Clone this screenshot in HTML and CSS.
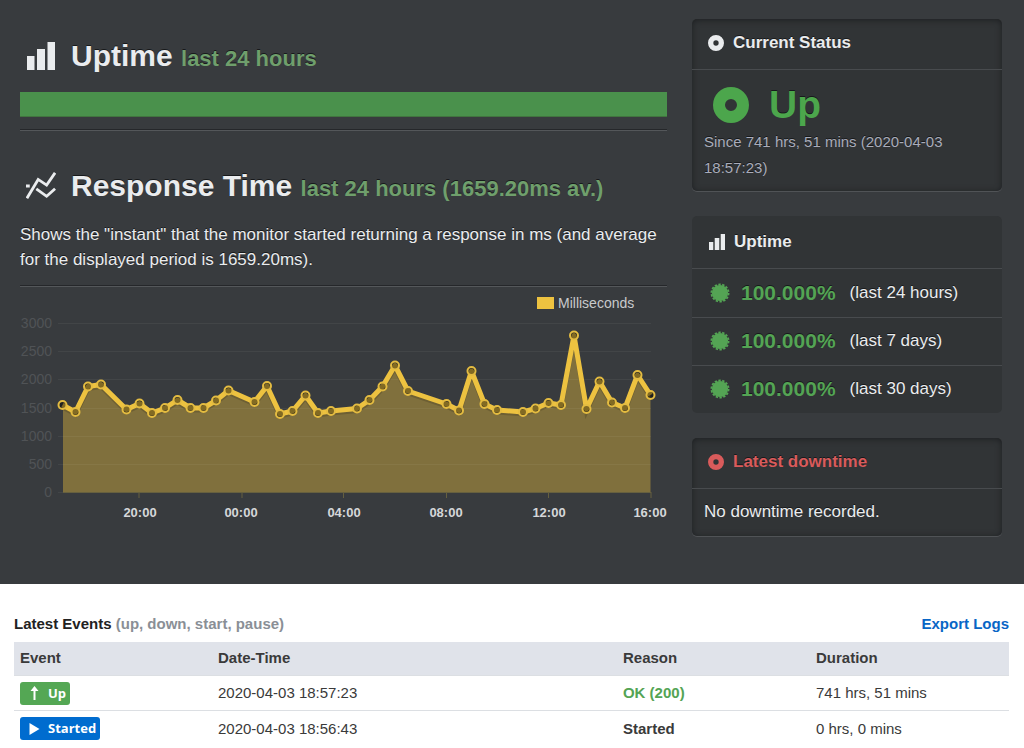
FILE: index.html
```html
<!DOCTYPE html>
<html lang="en">
<head>
<meta charset="utf-8">
<title>Monitor status</title>
<link rel="stylesheet" href="styles.css">
</head>
<body>
<svg class="defs" aria-hidden="true">
  <symbol id="bars" viewBox="0 0 28 28"><path d="M0 14h7.500v14H0zM10 7h8v21h-8zM20.500 0H28v28h-7.500z"/></symbol>
  <symbol id="disc" viewBox="0 0 36 36"><path fill-rule="evenodd" d="M18 0a18 18 0 1 0 0 36a18 18 0 1 0 0-36zM18 12a6 6 0 1 1 0 12a6 6 0 1 1 0-12z"/></symbol>
  <symbol id="seal" viewBox="0 0 20 20"><circle cx="10" cy="10" r="8.100"/><circle cx="10" cy="10" r="8.600" fill="none" stroke="currentColor" stroke-width="1.800" stroke-dasharray="2.400 1.460"/></symbol>
</svg>
<main class="dashboard">
  <div class="charts">
    <h2 class="heading"><svg class="heading-icon"><use href="#bars"/></svg><span>Uptime <small>last 24 hours</small></span></h2>
    <div class="uptime-bar"></div>
    <hr class="rule">
    <h2 class="heading heading-response"><svg class="heading-icon heading-trend" viewBox="0 0 32 28"><path d="M1 27L13 7l9 6L31 0M11 17l11 8 9-8M0 14h4" /></svg><span>Response Time <small>last 24 hours (1659.20ms av.)</small></span></h2>
    <p class="note">Shows the "instant" that the monitor started returning a response in ms (and average for the displayed period is 1659.20ms).</p>
    <hr class="rule rule-chart">
    <svg class="chart" viewBox="20 290 647 234" role="img" aria-label="Response time in milliseconds">
      <defs><marker id="dot" markerUnits="userSpaceOnUse" markerWidth="14" markerHeight="14" refX="7" refY="7"><circle class="dot" cx="7" cy="7" r="4"/></marker></defs>
      <rect class="legend-box" x="537" y="297" width="17" height="12"/>
      <text class="legend" x="558" y="308">Milliseconds</text>
      <g class="y-axis">
        <text x="52" y="328">3000</text><text x="52" y="356">2500</text><text x="52" y="384">2000</text><text x="52" y="413">1500</text><text x="52" y="441">1000</text><text x="52" y="469">500</text><text x="52" y="497">0</text>
      </g>
      <path class="area" d="M63 492V405L75.500 412L88 386.500L101 384.500L126.500 409.500L139.500 403.500L152 413L165 408L177.500 400L190.500 408L203.500 408L216 400.500L228.500 390.500L254.500 402L267 386L280 414L292.500 411L305.500 395.500L318 413L331 411L357 408.500L369.500 400L382.500 386.500L395 365.500L408 391L446.500 404L459 410.500L471.500 371L484.500 404L497 410L523 412L535.500 408.500L548.500 403L561 405L574 335.500L586.500 409L599.500 381.500L612 402.500L625 408L637.500 375L650.500 395V492Z"/>
      <path class="grid" d="M58 323.500H651M58 351.500H651M58 379.500H651M58 408.500H651M58 436.500H651M58 464.500H651M58 492.500H651"/>
      <path class="ticks" d="M63 492.500H651M139 492v6M242 492v6M343.500 492v6M446.500 492v6M548.500 492v6M651 492v6"/>
      <polyline class="shade" points="62.500,407 75.500,414 88,388.500 101,386.500 126.500,411.500 139.500,405.500 152,415 165,410 177.500,402 190.500,410 203.500,410 216,402.500 228.500,392.500 254.500,404 267,388 280,416 292.500,413 305.500,397.500 318,415 331,413 357,410.500 369.500,402 382.500,388.500 395,367.500 408,393 446.500,406 459,412.500 471.500,373 484.500,406 497,412 523,414 535.500,410.500 548.500,405 561,407 574,337.500 586.500,411 599.500,383.500 612,404.500 625,410 637.500,377 650.500,397"/>
      <polyline class="line" points="62.500,405 75.500,412 88,386.500 101,384.500 126.500,409.500 139.500,403.500 152,413 165,408 177.500,400 190.500,408 203.500,408 216,400.500 228.500,390.500 254.500,402 267,386 280,414 292.500,411 305.500,395.500 318,413 331,411 357,408.500 369.500,400 382.500,386.500 395,365.500 408,391 446.500,404 459,410.500 471.500,371 484.500,404 497,410 523,412 535.500,408.500 548.500,403 561,405 574,335.500 586.500,409 599.500,381.500 612,402.500 625,408 637.500,375 650.500,395"/>
      <g class="x-axis">
        <text x="140" y="517">20:00</text><text x="241" y="517">00:00</text><text x="344" y="517">04:00</text><text x="446" y="517">08:00</text><text x="549" y="517">12:00</text><text x="650" y="517">16:00</text>
      </g>
    </svg>
  </div>
  <aside class="cards">
    <section class="card inset">
      <h3 class="card-title"><svg class="icon"><use href="#disc"/></svg>Current Status</h3>
      <div class="status">
        <div class="status-value"><svg class="status-icon"><use href="#disc"/></svg>Up</div>
        <p class="since">Since 741 hrs, 51 mins (2020-04-03 18:57:23)</p>
      </div>
    </section>
    <section class="card">
      <h3 class="card-title card-title-tall"><svg class="icon"><use href="#bars"/></svg>Uptime</h3>
      <ul class="rates">
        <li><svg class="seal"><use href="#seal"/></svg><strong>100.000%</strong><span>(last 24 hours)</span></li>
        <li><svg class="seal"><use href="#seal"/></svg><strong>100.000%</strong><span>(last 7 days)</span></li>
        <li><svg class="seal"><use href="#seal"/></svg><strong>100.000%</strong><span>(last 30 days)</span></li>
      </ul>
    </section>
    <section class="card inset">
      <h3 class="card-title danger"><svg class="icon"><use href="#disc"/></svg>Latest downtime</h3>
      <p class="downtime">No downtime recorded.</p>
    </section>
  </aside>
</main>
<section class="events">
  <header class="events-head">
    <h3>Latest Events <span>(up, down, start, pause)</span></h3>
    <a href="#export">Export Logs</a>
  </header>
  <table class="log">
    <thead><tr><th class="col-event">Event</th><th class="col-date">Date-Time</th><th class="col-reason">Reason</th><th>Duration</th></tr></thead>
    <tbody>
      <tr><td><span class="badge up"><svg viewBox="0 0 12 14"><path d="M6 0l4 5H7v9H5V5H2z"/></svg>Up</span></td><td>2020-04-03 18:57:23</td><td class="ok">OK (200)</td><td>741 hrs, 51 mins</td></tr>
      <tr><td><span class="badge started"><svg viewBox="0 0 12 14"><path d="M1 1l10 6-10 6z"/></svg>Started</span></td><td>2020-04-03 18:56:43</td><td class="bold">Started</td><td>0 hrs, 0 mins</td></tr>
    </tbody>
  </table>
</section>
</body>
</html>
```
FILE: styles.css
```css
* { box-sizing: border-box; }
body {
  margin: 0;
  background: #fff;
  color: #3a3a3a;
  font: 15px/20px "Liberation Sans", Arial, sans-serif;
}
h2, h3, p, ul { margin: 0; padding: 0; }
svg { display: block; flex: none; fill: currentColor; }
.defs { position: absolute; width: 0; height: 0; }

.dashboard {
  display: grid;
  grid-template-columns: minmax(0, 1fr) 310px;
  gap: 25px;
  padding: 19px 22px 48px 20px;
  background: #383b3e;
  color: #eaecee;
  text-shadow: 0 -1px 0 #17191b;
}
.heading {
  display: flex;
  align-items: center;
  gap: 15px;
  padding: 19px 0 0 6px;
  font-size: 30px;
  line-height: 36px;
}
.heading small { font-size: 22px; line-height: 22px; color: #6f9f6c; }
.heading-icon { width: 30px; height: 28px; }
.heading-trend { fill: none; stroke: currentColor; stroke-width: 3; }
.heading-response { padding-top: 37px; }
.uptime-bar { height: 25px; margin-top: 18px; background: #4a914c; border-bottom: 1px solid #41743f; }
.rule {
  margin: 12px 0 0;
  border: 0;
  border-top: 1px solid #25272a;
  border-bottom: 1px solid #54575a;
}
.note { margin-top: 18px; font-size: 17px; line-height: 25px; }
.rule-chart { margin-top: 13px; }
.chart { width: 100%; height: auto; margin-top: 3px; text-shadow: none; }
.legend-box { fill: #edc240; }
.legend { fill: #c8cacc; font-size: 14px; }
.y-axis { fill: #505356; font-size: 14px; text-anchor: end; }
.x-axis { fill: #d5d7d9; font-size: 13px; font-weight: bold; text-anchor: middle; }
.area { fill: #80703d; }
.grid { stroke: #fff; stroke-opacity: .05; }
.ticks { fill: none; stroke: #66603f; }
.shade { fill: none; stroke: #000; stroke-opacity: .15; stroke-width: 5; }
.line { fill: none; stroke: #edc240; stroke-width: 5; stroke-linejoin: round; marker: url(#dot); }
.dot { fill: #000; fill-opacity: .45; stroke: #e4bc41; stroke-width: 2; }

.cards { display: flex; flex-direction: column; gap: 25px; }
.card { background: #313436; border-radius: 5px; overflow: hidden; }
.inset { box-shadow: inset 0 1px 6px #1d1f21, 0 1px 0 #505356; }
.card-title {
  display: flex;
  align-items: center;
  gap: 9px;
  height: 51px;
  padding: 0 16px 2px;
  border-bottom: 1px solid #484b4e;
  font-size: 17px;
}
.card-title-tall { height: 53px; padding: 0 17px; }
.icon { width: 16px; height: 16px; }
.danger { color: #d95b5b; }
.status { padding: 12px 12px 10px; }
.status-value {
  display: flex;
  align-items: center;
  gap: 20px;
  padding-left: 9px;
  color: #4ca64c;
  font-size: 39px;
  font-weight: bold;
  line-height: 46px;
}
.status-icon { width: 36px; height: 36px; }
.since { margin-top: 1px; color: #a9acba; font-size: 15px; line-height: 26px; }
.rates { list-style: none; font-size: 17px; }
.rates li { display: flex; align-items: center; height: 48px; padding: 0 0 1px 18px; }
.rates li + li { border-top: 1px solid #484b4e; }
.rates strong { margin: 0 14px 0 11px; color: #54a454; font-size: 21px; }
.seal { width: 20px; height: 20px; color: #54a454; }
.downtime { padding: 10px 12px 12px; font-size: 17px; line-height: 25px; }

.events { padding: 30px 15px 0 14px; }
.events-head { display: flex; justify-content: space-between; align-items: center; }
.events-head h3 { color: #222; font-size: 15px; }
.events-head h3 span { color: #8a8f96; }
.events-head a { color: #0866c6; font-weight: bold; text-decoration: none; }
.log { width: 100%; margin-top: 8px; border-spacing: 0; table-layout: fixed; }
.log th, .log td { height: 35px; padding: 0 6px; text-align: left; border-bottom: 1px solid #dcdfe3; }
.log th { height: 34px; padding-bottom: 2px; background: #e0e3ea; }
.log tr:last-child td { border-bottom: 0; }
.log .ok { color: #54a454; font-weight: bold; }
.log .bold { font-weight: bold; }
.col-event { width: 198px; }
.col-date { width: 40.7%; }
.col-reason { width: 19.4%; }
.badge {
  display: inline-flex;
  align-items: center;
  gap: 7px;
  height: 23px;
  padding: 0 4px 0 8px;
  border-radius: 3px;
  color: #fff;
  font: bold 13px/23px "Open Sans", sans-serif;
  vertical-align: middle;
}
.badge svg { width: 13px; height: 14px; }
.up { background: #54a754; }
.started { background: #006ccf; }
```
